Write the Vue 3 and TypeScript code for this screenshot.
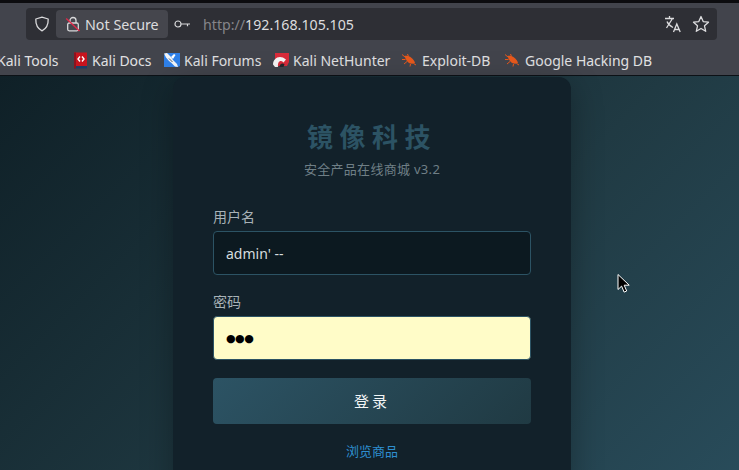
<script setup lang="ts">
type Mark = 'book' | 'forum' | 'hunter' | 'bug'
const marks: { label: string; icon: Mark | null; width: number }[] = [
  { label: 'Kali Tools', icon: null, width: 64 },
  { label: 'Kali Docs', icon: 'book', width: 60 },
  { label: 'Kali Forums', icon: 'forum', width: 77 },
  { label: 'Kali NetHunter', icon: 'hunter', width: 97 },
  { label: 'Exploit-DB', icon: 'bug', width: 71 },
  { label: 'Google Hacking DB', icon: 'bug', width: 127 },
]
</script>

<template>
  <div class="window">
    <header class="chrome">
      <div class="urlbar">
        <svg class="shield" viewBox="0 0 16 16" width="16" height="16" fill="none" stroke="#d8d8da" stroke-width="1.3">
          <path d="M8 1.200 14.200 3c.2 5.600-1.600 9.500-6.200 11.800C3.400 12.500 1.600 8.600 1.800 3L8 1.200Z" stroke-linejoin="round" />
        </svg>
        <div class="secure">
          <svg viewBox="0 0 16 16" width="16" height="16" fill="none">
            <path d="M5 7V4.500a3 3 0 0 1 6 0V7" stroke="#d8d8da" stroke-width="1.300" />
            <rect x="2.700" y="7" width="10.600" height="7.800" rx="1.500" stroke="#d8d8da" stroke-width="1.300" />
            <path d="M1.200 2.500 14.500 15" stroke="#e0294a" stroke-width="1.400" />
          </svg>
          <span>Not Secure</span>
        </div>
        <svg class="key" viewBox="0 0 16 10" width="16" height="10" fill="none" stroke="#d8d8da" stroke-width="1.200">
          <circle cx="4" cy="5" r="3" />
          <path d="M7 5h9M13.500 5v2.200" />
        </svg>
        <div class="address"><span class="scheme">http://</span>192.168.105.105</div>
        <svg class="translate" viewBox="0 0 18 18" width="18" height="18" fill="none" stroke="#dcdcde" stroke-width="1.300">
          <path d="M1 3.500h9M5.500 1v2.500M2.500 13 8.500 3.500M3 6.500c1 2.500 3 4.500 6 6" />
          <path d="m9.500 17 3.300-8 3.400 8M10.700 14.500h4.400" />
        </svg>
        <svg class="star" viewBox="0 0 18 18" width="18" height="18" fill="none" stroke="#dcdcde" stroke-width="1.300">
          <path d="M9 1.500 11.200 6.600l5.300.6-4 3.600 1.200 5.500L9 13.500l-4.700 2.800 1.200-5.500-4-3.600 5.300-.6L9 1.500Z" stroke-linejoin="round" />
        </svg>
      </div>
      <nav class="bookmarks">
        <div v-for="m in marks" :key="m.label" class="mark">
          <svg v-if="m.icon === 'book'" viewBox="0 0 15 17" width="15" height="17">
            <rect x="1" y="0.500" width="13" height="13.500" fill="#c8141e" />
            <rect x="1" y="14" width="13" height="2.500" fill="#1d3d66" />
            <rect x="1" y="0.500" width="2" height="16" fill="#8a1420" />
            <path d="M7 4.500 5 7l2 2.500M9 4.500 11 7 9 9.500" fill="none" stroke="#fff" stroke-width="1.400" />
          </svg>
          <svg v-else-if="m.icon === 'forum'" viewBox="0 0 16 16" width="16" height="16">
            <path d="M2 1h14v13l-2 1H2L0 15V3Z" fill="#2f80e8" />
            <path d="M0 1.500 3 1l4 4 2 3 4 4 1 3-3-.5-3.500-3.500L5 9 2 5.500Z" fill="#f2f5f8" />
            <path d="m7 5 3-3 1.500 1L9 7Z" fill="#fff" />
            <path d="M5 6.500 8.500 10" stroke="#3c4a58" stroke-width="0.900" />
          </svg>
          <svg v-else-if="m.icon === 'hunter'" viewBox="0 0 16 16" width="16" height="16">
            <path d="M2 1h14v9l-2 4H2Z" fill="#d92b3a" />
            <path d="M0 12.500C0 6 7 2 13 7.500l-2.500 3C7.500 7.500 4.500 9.500 5 15H2Z" fill="#f5f5f5" />
            <path d="M6.500 15c0-3 2.500-4.500 5-3l-1 3Z" fill="#24262b" />
          </svg>
          <svg v-else-if="m.icon === 'bug'" viewBox="0 0 16 14" width="16" height="14">
            <path d="M2.500 3c4-.8 9 2 10.500 7-5 2.500-9-1.500-10.500-7Z" fill="#e8591c" />
            <path d="M0 1.500 3 4M5.500 1l1 2.500M0 6.500h3.500M2 11l3-2.500M8 13.500l.5-2.500M14 12l-2.500-1.500" stroke="#e8591c" stroke-width="1" fill="none" />
          </svg>
          <span :style="{ width: m.width + 'px' }">{{ m.label }}</span>
        </div>
      </nav>
    </header>

    <main class="page">
      <section class="card">
        <h1>镜像科技</h1>
        <p class="sub">安全产品在线商城 v3.2</p>
        <label class="field">
          <span>用户名</span>
          <input type="text" value="admin' --" readonly />
        </label>
        <label class="field second">
          <span>密码</span>
          <input class="filled" type="text" value="●●●" readonly />
        </label>
        <button type="button">登录</button>
        <a class="browse">浏览商品</a>
      </section>
      <svg class="cursor" viewBox="0 0 14 20" width="14" height="21">
        <path d="M1 1v15l3.600-3.400 2.500 6 2.600-1.100-2.500-5.800h5Z" fill="#000" stroke="#fff" stroke-width="1" />
      </svg>
    </main>
  </div>
</template>

<style>
html, body { margin: 0; height: 100%; overflow: hidden; background: #0f2027; }
</style>

<style scoped>
.window {
  width: 739px;
  height: 470px;
  display: flex;
  flex-direction: column;
  overflow: hidden;
  font-family: "Noto Sans", "Noto Sans CJK SC", sans-serif;
}
.chrome {
  flex: none;
  height: 76px;
  box-sizing: border-box;
  padding-top: 5px;
  background: #42444c;
  border-top: 3px solid #0c0c0f;
  border-bottom: 1px solid #0c1116;
}
.urlbar {
  margin: 0 22px 0 26px;
  height: 32px;
  box-sizing: border-box;
  display: flex;
  align-items: center;
  background: #2e2f35;
  border-radius: 4px;
  padding: 0 7px 0 8px;
}
.shield { flex: none; }
.secure {
  margin-left: 6px;
  height: 28px;
  width: 112px;
  box-sizing: border-box;
  padding-left: 9px;
  display: flex;
  align-items: center;
  gap: 4px;
  background: #45464d;
  border-radius: 4px;
  font-size: 14.300px;
  color: #dcdcde;
}
.key { margin-left: 6px; flex: none; }
.address {
  margin-left: 13px;
  flex: 1;
  font-size: 14.200px;
  color: #dcdcde;
}
.scheme { color: #85858a; }
.translate { margin-right: 10px; }
.bookmarks {
  height: 30px;
  margin: 5px 0 0 -3px;
  display: flex;
  align-items: center;
  gap: 12px;
  font-size: 14px;
  color: #e0e0e2;
}
.mark {
  flex: none;
  display: flex;
  align-items: center;
  gap: 4px;
  white-space: nowrap;
}
.mark svg { flex: none; }
.mark span { display: block; }
.page {
  position: relative;
  flex: 1;
  min-height: 0;
  display: flex;
  justify-content: center;
  align-items: flex-start;
  padding-left: 5px;
  background: linear-gradient(135deg, #0f2027 0%, #203a43 50%, #2c5364 100%);
  background-size: 739px 600px;
}
.card {
  flex: none;
  width: 398px;
  height: 420px;
  margin-top: 1px;
  box-sizing: border-box;
  padding: 0 40px;
  display: flex;
  flex-direction: column;
  background: #12212a;
  border-radius: 12px;
  box-shadow: 0 8px 32px rgba(0, 0, 0, 0.3);
}
h1 {
  margin: 43px 0 0;
  text-align: center;
  font-size: 26px;
  line-height: 34px;
  font-weight: 700;
  letter-spacing: 6.500px;
  color: #2c5364;
}
.sub {
  margin: 6px 0 0;
  text-align: center;
  font-size: 13px;
  line-height: 18px;
  letter-spacing: 0.300px;
  color: #6f7f86;
}
.field {
  display: flex;
  flex-direction: column;
  margin-top: 30px;
  font-size: 14px;
  color: #a8b2b7;
}
.field span {
  line-height: 18px;
  margin-bottom: 5px;
}
.second { margin-top: 18px; }
input {
  width: 100%;
  height: 44px;
  box-sizing: border-box;
  padding: 0 12px;
  border: 1px solid #2c5364;
  border-radius: 4px;
  outline: none;
  background: #0c1920;
  color: #d6dcdf;
  font-family: inherit;
  font-size: 14px;
}
input.filled {
  background: #fffcc8;
  color: #000;
  font-family: "DejaVu Sans", sans-serif;
  font-size: 11px;
  letter-spacing: -0.500px;
}
button {
  margin-top: 18px;
  height: 46px;
  padding: 0 0 2px;
  border: 0;
  border-radius: 4px;
  background: linear-gradient(135deg, #2c5364, #203a43);
  color: #f2f5f6;
  font-family: inherit;
  font-size: 15px;
  letter-spacing: 3px;
}
.browse {
  margin-top: 18px;
  text-align: center;
  font-size: 13px;
  line-height: 18px;
  color: #2e8fd0;
}
.cursor {
  position: absolute;
  left: 617px;
  top: 197px;
}
</style>
